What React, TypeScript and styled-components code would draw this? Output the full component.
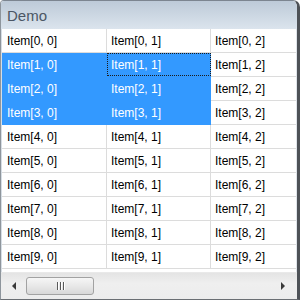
import styled, { createGlobalStyle } from "styled-components";

const GlobalStyle = createGlobalStyle`
    html, body {
        margin: 0;
        padding: 0;
        background: #ffffff;
    }
`

const StyledWindow = styled.div`
    box-sizing: border-box;
    width: 300px;
    height: 300px;
    display: flex;
    flex-direction: column;
    border-top: 1px solid #7c8590;
    border-left: 1px solid #8e959c;
    border-right: 3px solid #4e5257;
    border-bottom: 1px solid #6a6e73;
    border-top-left-radius: 4px;
    border-top-right-radius: 7px;
    overflow: hidden;
    font-family: "Liberation Sans", Arial, sans-serif;
`
const StyledHeader = styled.div`
    height: 28px;
    flex: none;
    display: flex;
    align-items: center;
    padding-left: 6px;
    background: linear-gradient(to bottom, #bdcad8, #dbe4ed);
    color: #4b5664;
    font-size: 15px;
`
const StyledGrid = styled.div`
    flex: 1;
    display: flex;
    flex-direction: column;
    overflow: hidden;
    background: #ffffff;
    border-left: 1px solid #d6dde4;
    border-right: 1px solid #dfe4ea;
`
const StyledRow = styled.div`
    display: flex;
    flex: none;
`
const StyledCell = styled.div<{ $selected?: boolean; $focused?: boolean; $first?: boolean }>`
    box-sizing: border-box;
    flex: none;
    position: relative;
    width: ${p => (p.$first ? "105px" : "104px")};
    height: 24px;
    display: flex;
    align-items: center;
    padding-left: ${p => (p.$first ? "5px" : "4px")};
    font-size: 12px;
    white-space: nowrap;
    color: ${p => (p.$selected ? "#ffffff" : "#000000")};
    background: ${p => (p.$selected ? "#3399ff" : "#ffffff")};
    border-right: 1px solid ${p => (p.$selected ? "#3399ff" : "#dcdcdc")};
    border-bottom: 1px solid ${p => (p.$selected ? "#3399ff" : "#dcdcdc")};

    &::after {
        content: "";
        display: ${p => (p.$focused ? "block" : "none")};
        position: absolute;
        inset: 0 -1px 0 0;
        border: 1px dotted #1b1b1b;
    }
`
const StyledScrollBar = styled.div`
    flex: none;
    height: 26px;
    display: flex;
    align-items: center;
    gap: 6px;
    padding: 0 8px 0 7px;
    background: linear-gradient(to bottom, #e4e4e4, #efefef 40%, #ececec);
    border-top: 1px solid #e9e9e9;
`
const StyledArrow = styled.div<{ $dir: "left" | "right" }>`
    width: 0;
    height: 0;
    border-top: 4px solid transparent;
    border-bottom: 4px solid transparent;
    ${p => (p.$dir === "left" ? "border-right: 4px solid #3a3a3a;" : "border-left: 4px solid #3a3a3a;")}
    margin: 0 4px;
`
const StyledTrack = styled.div`
    flex: 1;
    height: 18px;
    display: flex;
    align-items: center;
`
const StyledThumb = styled.div`
    box-sizing: border-box;
    width: 68px;
    height: 18px;
    display: flex;
    align-items: center;
    justify-content: center;
    gap: 2px;
    border: 1px solid #a2a2a2;
    border-radius: 3px;
    background: linear-gradient(to bottom, #f6f6f6, #e8e8e8 50%, #d8d8d8);
`
const StyledGripLine = styled.span`
    width: 1px;
    height: 8px;
    background: #5a5a5a;
    box-shadow: 1px 0 0 #ffffff;
`

const rows = Array.from({ length: 10 }, (_, r) => r);
const cols = [0, 1, 2];

function isSelected(r: number, c: number) {
    return r >= 1 && r <= 3 && c <= 1;
}

export default function App() {
    return (
        <>
            <GlobalStyle />
            <StyledWindow>
                <StyledHeader>Demo</StyledHeader>
                <StyledGrid>
                    {rows.map(r => (
                        <StyledRow key={r}>
                            {cols.map(c => (
                                <StyledCell
                                    key={c}
                                    $first={c === 0}
                                    $selected={isSelected(r, c)}
                                    $focused={r === 1 && c === 1}
                                >
                                    Item[{r}, {c}]
                                </StyledCell>
                            ))}
                        </StyledRow>
                    ))}
                </StyledGrid>
                <StyledScrollBar>
                    <StyledArrow $dir="left" />
                    <StyledTrack>
                        <StyledThumb>
                            <StyledGripLine />
                            <StyledGripLine />
                            <StyledGripLine />
                        </StyledThumb>
                    </StyledTrack>
                    <StyledArrow $dir="right" />
                </StyledScrollBar>
            </StyledWindow>
        </>
    );
}
